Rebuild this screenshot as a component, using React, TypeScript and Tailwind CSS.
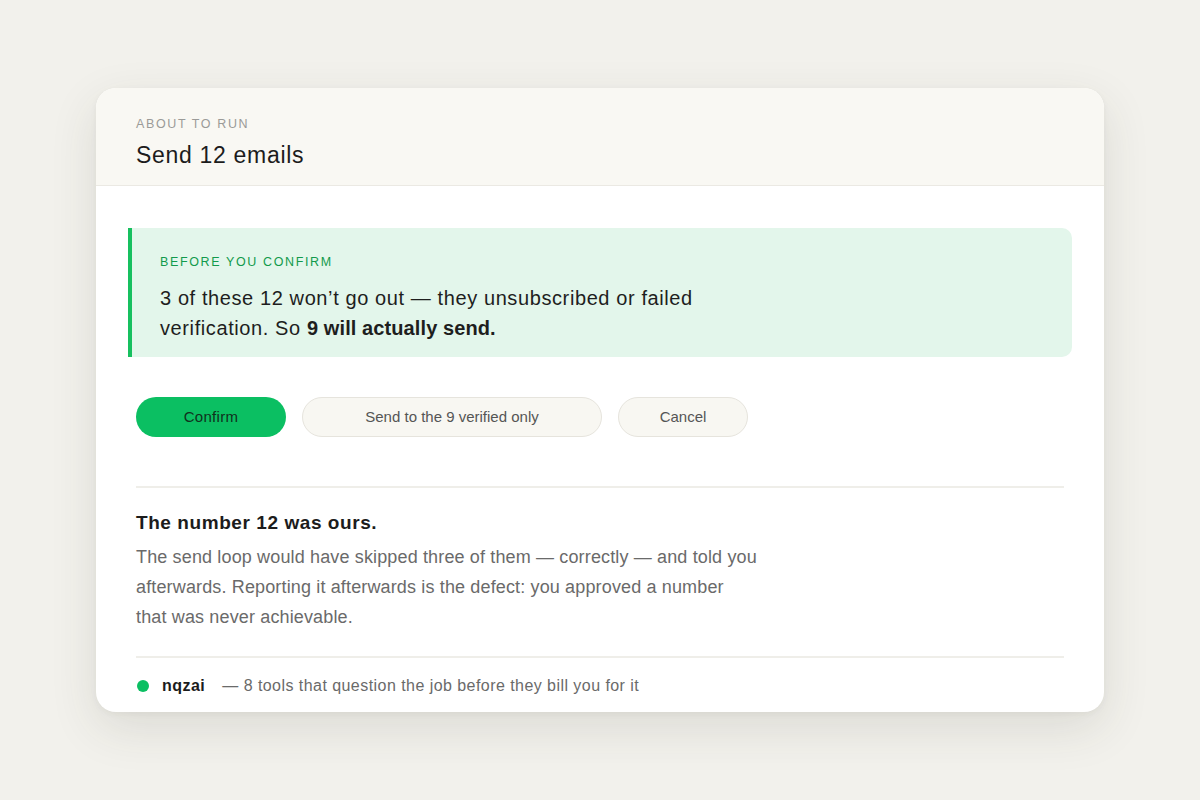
import React from "react";

export default function App() {
  return (
    <div
      className="min-h-[800px] w-full bg-[#f2f1ec] flex justify-center pt-[88px]"
      style={{ fontFamily: '"Liberation Sans", Arial, sans-serif' }}
    >
      <div className="w-[1008px] h-[624px] bg-white rounded-[20px] overflow-hidden shadow-[0_16px_48px_rgba(60,55,40,0.12),0_2px_6px_rgba(60,55,40,0.05)] flex flex-col">
        <div className="bg-[#f9f8f3] border-b border-[#ebe9e3] px-10 pt-[29px] pb-[16px]">
          <div className="text-[12.5px] tracking-[0.13em] text-[#9b9b98] leading-[14px]">ABOUT TO RUN</div>
          <div className="text-[23px] tracking-[0.03em] text-[#1c1c1c] leading-[28px] mt-[10px]">Send 12 emails</div>
        </div>
        <div className="px-10 pt-[42px]">
          <div className="-mx-2 bg-[#e3f6eb] border-l-4 border-[#17c05f] rounded-r-[10px] pl-7 pr-8 pt-[27px] pb-[14px]">
            <div className="text-[12.5px] tracking-[0.13em] text-[#129a4c] leading-[14px]">BEFORE YOU CONFIRM</div>
            <p className="text-[20px] tracking-[0.03em] text-[#1e1e1e] leading-[30px] mt-[14px]">
              3 of these 12 won’t go out — they unsubscribed or failed
              <br />
              verification. So <strong className="font-bold tracking-[0.005em]">9 will actually send.</strong>
            </p>
          </div>
          <div className="flex gap-4 mt-10">
            <button className="w-[150px] h-10 rounded-full bg-[#0bbf62] text-[#10301c] text-[15px] tracking-[0.02em]">
              Confirm
            </button>
            <button className="w-[300px] h-10 rounded-full bg-[#f8f7f2] border border-[#e6e4dd] text-[#555] text-[15px]">
              Send to the 9 verified only
            </button>
            <button className="w-[130px] h-10 rounded-full bg-[#f8f7f2] border border-[#e6e4dd] text-[#555] text-[15px]">
              Cancel
            </button>
          </div>
          <div className="h-[2px] bg-[#efeee9] mt-[49px]" />
          <div className="pt-[24px] pb-[24px]">
            <div className="text-[19px] tracking-[0.03em] font-bold text-[#1c1c1c] leading-[22px]">The number 12 was ours.</div>
            <p className="text-[18px] tracking-[0.008em] text-[#6a6a6a] leading-[30px] mt-[8px]">
              The send loop would have skipped three of them — correctly — and told you
              <br />
              afterwards. Reporting it afterwards is the defect: you approved a number
              <br />
              that was never achievable.
            </p>
          </div>
          <div className="h-[2px] bg-[#efeee9]" />
          <div className="flex items-center h-[55px] text-[16px]">
            <span className="w-3 h-3 rounded-full bg-[#0bbf62] ml-[1px]" />
            <span className="font-bold text-[#1c1c1c] ml-[13px] tracking-[0.03em]">nqzai</span>
            <span className="text-[#6a6a6a] ml-[17px] tracking-[0.028em]">
              — 8 tools that question the job before they bill you for it
            </span>
          </div>
        </div>
      </div>
    </div>
  );
}
